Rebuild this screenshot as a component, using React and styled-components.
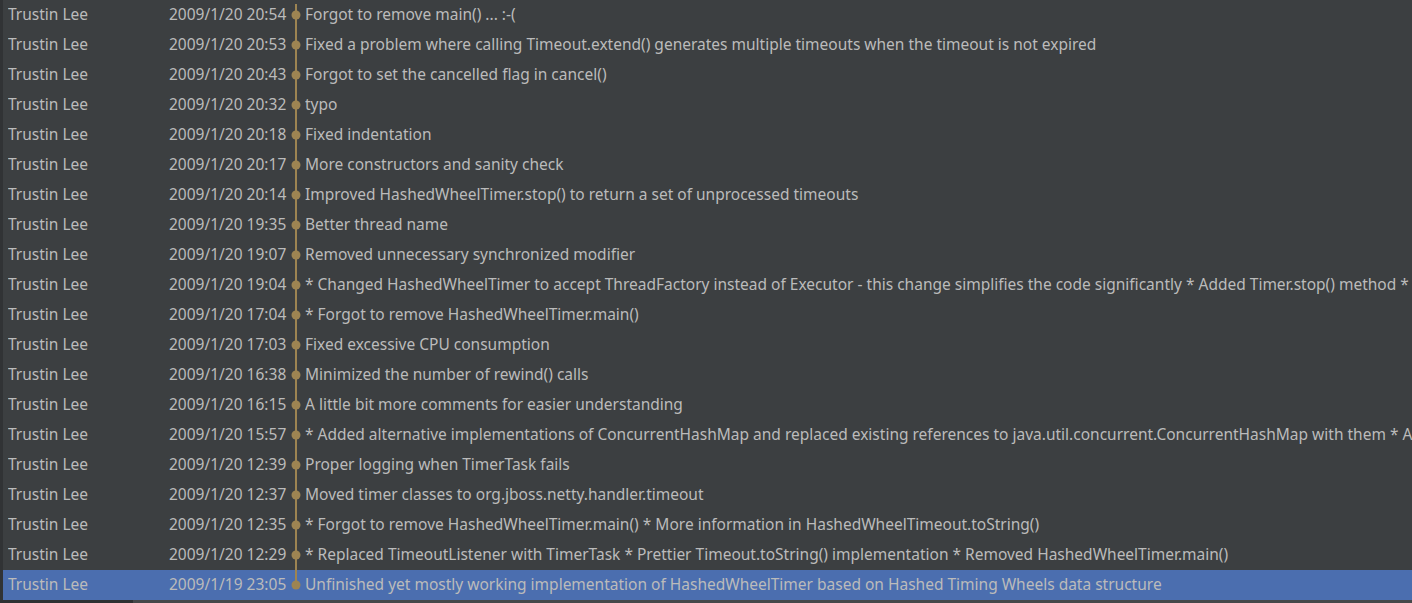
import React from 'react'
import styled, { createGlobalStyle } from 'styled-components'

const GlobalStyle = createGlobalStyle`
  html, body {
    margin: 0;
    padding: 0;
    background: #3c3f41;
    overflow: hidden;
  }
  * { box-sizing: border-box; }
`

const commits = [
  ['2009/1/20 20:54', 'Forgot to remove main() ... :-('],
  ['2009/1/20 20:53', 'Fixed a problem where calling Timeout.extend() generates multiple timeouts when the timeout is not expired'],
  ['2009/1/20 20:43', 'Forgot to set the cancelled flag in cancel()'],
  ['2009/1/20 20:32', 'typo'],
  ['2009/1/20 20:18', 'Fixed indentation'],
  ['2009/1/20 20:17', 'More constructors and sanity check'],
  ['2009/1/20 20:14', 'Improved HashedWheelTimer.stop() to return a set of unprocessed timeouts'],
  ['2009/1/20 19:35', 'Better thread name'],
  ['2009/1/20 19:07', 'Removed unnecessary synchronized modifier'],
  ['2009/1/20 19:04', '* Changed HashedWheelTimer to accept ThreadFactory instead of Executor - this change simplifies the code significantly * Added Timer.stop() method *'],
  ['2009/1/20 17:04', '* Forgot to remove HashedWheelTimer.main()'],
  ['2009/1/20 17:03', 'Fixed excessive CPU consumption'],
  ['2009/1/20 16:38', 'Minimized the number of rewind() calls'],
  ['2009/1/20 16:15', 'A little bit more comments for easier understanding'],
  ['2009/1/20 15:57', '* Added alternative implementations of ConcurrentHashMap and replaced existing references to java.util.concurrent.ConcurrentHashMap with them * Ad'],
  ['2009/1/20 12:39', 'Proper logging when TimerTask fails'],
  ['2009/1/20 12:37', 'Moved timer classes to org.jboss.netty.handler.timeout'],
  ['2009/1/20 12:35', '* Forgot to remove HashedWheelTimer.main() * More information in HashedWheelTimeout.toString()'],
  ['2009/1/20 12:29', '* Replaced TimeoutListener with TimerTask * Prettier Timeout.toString() implementation * Removed HashedWheelTimer.main()'],
  ['2009/1/19 23:05', 'Unfinished yet mostly working implementation of HashedWheelTimer based on Hashed Timing Wheels data structure'],
]

const Panel = styled.div`
  width: 1412px;
  height: 603px;
  display: flex;
  flex-direction: column;
  border-left: 3px solid #313335;
  font-family: "Noto Sans", "Open Sans", sans-serif;
  font-size: 15.5px;
  color: #bbbbbb;
`

const List = styled.div`
  flex: 1;
  display: flex;
  flex-direction: column;
`

const Row = styled.div`
  height: 30px;
  display: grid;
  grid-template-columns: 161px 119px 17px 1fr;
  align-items: center;
  padding-left: 5px;
  background: ${(p) => (p.$selected ? '#4b6eaf' : 'transparent')};
  white-space: nowrap;
`

const Cell = styled.div`
  overflow: hidden;
  line-height: 30px;
  padding-bottom: 2px;
`

const Graph = styled.svg`
  display: block;
  width: 17px;
  height: 30px;
`

const Scrollbar = styled.div`
  height: 3px;
  display: flex;
  background: #45484a;
  margin-left: -3px;
`

const Thumb = styled.div`
  width: 133px;
  background: #2f3133;
`

const GOLD = '#9d8452'

function GraphCell({ first, last }) {
  return (
    <Graph viewBox="0 0 17 30">
      <line
        x1="8"
        x2="8"
        y1={first ? 4 : 0}
        y2={last ? 15 : 30}
        stroke={GOLD}
        strokeWidth="2"
      />
      <circle cx="8" cy="15" r="4.5" fill={GOLD} />
    </Graph>
  )
}

export default function App() {
  return (
    <>
      <GlobalStyle />
      <Panel>
        <List>
          {commits.map(([date, msg], i) => (
            <Row key={i} $selected={i === commits.length - 1}>
              <Cell>Trustin Lee</Cell>
              <Cell>{date}</Cell>
              <GraphCell first={i === 0} last={i === commits.length - 1} />
              <Cell>{msg}</Cell>
            </Row>
          ))}
        </List>
        <Scrollbar>
          <Thumb />
        </Scrollbar>
      </Panel>
    </>
  )
}
